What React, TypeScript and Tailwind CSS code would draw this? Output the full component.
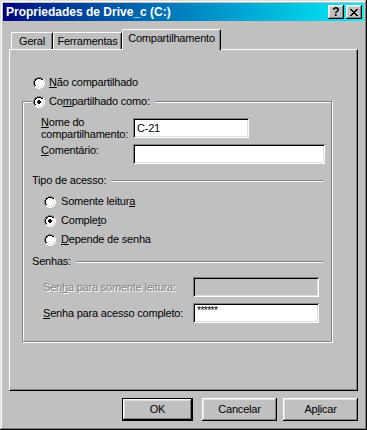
import { ReactNode } from "react";

// win98 bevels
const raised =
  "shadow-[inset_-1px_-1px_#000,inset_1px_1px_#fff,inset_-2px_-2px_#808080,inset_2px_2px_#dfdfdf]";
const sunken =
  "shadow-[inset_1px_1px_#808080,inset_-1px_-1px_#fff,inset_2px_2px_#000,inset_-2px_-2px_#dfdfdf]";

function Radio({ checked }: { checked?: boolean }) {
  return (
    <svg width="12" height="12" viewBox="0 0 12 12" shapeRendering="crispEdges" className="shrink-0">
      <path d="M4 0h4v1H4zM2 1h2v1H2zM8 1h2v1H8zM1 2h1v2H1zM0 4h1v4H0zM1 8h1v2H1z" fill="#808080" />
      <path d="M10 2h1v2h-1zM11 4h1v4h-1zM10 8h1v2h-1zM2 10h2v1H2zM8 10h2v1H8zM4 11h4v1H4z" fill="#fff" />
      <path d="M4 1h4v1H4zM2 2h2v1H2zM8 2h2v1H8zM2 3h1v1H2zM1 4h1v4H1zM2 8h1v1H2z" fill="#000" />
      <path d="M9 3h1v1H9zM10 4h1v4h-1zM9 8h1v1H9zM2 9h2v1H2zM8 9h2v1H8zM4 10h4v1H4z" fill="#dfdfdf" />
      <path d="M4 2h4v1H4zM3 3h6v1H3zM2 4h8v4H2zM3 8h6v1H3zM4 9h4v1H4z" fill="#fff" />
      {checked && <path d="M5 4h2v1H5zM4 5h4v2H4zM5 7h2v1H5z" fill="#000" />}
    </svg>
  );
}

function CloseGlyph() {
  return (
    <svg width="8" height="7" viewBox="0 0 8 7" shapeRendering="crispEdges">
      <path
        d="M0 0h2v1H0zM6 0h2v1H6zM1 1h2v1H1zM5 1h2v1H5zM2 2h4v1H2zM3 3h2v1H3zM2 4h4v1H2zM1 5h2v1H1zM5 5h2v1H5zM0 6h2v1H0zM6 6h2v1H6z"
        fill="#000"
      />
    </svg>
  );
}

function TitleButton({ children }: { children: ReactNode }) {
  return (
    <div className={`w-[16px] h-[14px] bg-[#c0c0c0] flex items-center justify-center ${raised}`}>
      {children}
    </div>
  );
}

function Tab({ label, width }: { label: ReactNode; width: string }) {
  return (
    <div
      className={`${width} h-[17px] flex items-center justify-center border-t border-l border-white border-r border-r-black rounded-tl-[2px] rounded-tr-[2px] shadow-[inset_-1px_0_#808080]`}
    >
      {label}
    </div>
  );
}

function Separator({ label }: { label: string }) {
  return (
    <div className="ml-[9px] mr-[8px] h-[13px] flex items-center gap-[5px]">
      <span className="whitespace-nowrap">{label}</span>
      <div className="flex-1 h-[2px] border-t border-t-[#808080] border-b border-b-white" />
    </div>
  );
}

function Button({ children, def, width }: { children: ReactNode; def?: boolean; width: string }) {
  return (
    <div
      className={`${width} h-[23px] flex items-center justify-center bg-[#c0c0c0] ${
        def
          ? "shadow-[inset_1px_1px_#000,inset_-1px_-1px_#000,inset_-2px_-2px_#000,inset_2px_2px_#fff,inset_-3px_-3px_#808080,inset_3px_3px_#dfdfdf]"
          : raised
      }`}
    >
      {children}
    </div>
  );
}

export default function App() {
  return (
    <div className="w-[367px] h-[430px] bg-[#c0c0c0] p-[3px] flex flex-col font-['Liberation_Sans',Arial,sans-serif] text-[11px] leading-[13px] tracking-[-0.2px] text-black shadow-[inset_-1px_-1px_#000,inset_1px_1px_#dfdfdf,inset_-2px_-2px_#808080,inset_2px_2px_#fff]">
      {/* title bar */}
      <div className="h-[18px] flex items-center pl-[3px] pr-[2px] bg-linear-to-r from-[#000080] to-[#10f0f8]">
        <span className="flex-1 text-white font-bold text-[12px] tracking-normal">
          Propriedades de Drive_c (C:)
        </span>
        <div className="flex gap-[2px]">
          <TitleButton>
            <span className="font-bold text-[12px] leading-none tracking-normal">?</span>
          </TitleButton>
          <TitleButton>
            <CloseGlyph />
          </TitleButton>
        </div>
      </div>

      <div className="mt-[8px] mx-[6px]">
        {/* tabs */}
        <div className="flex items-end h-[20px] pl-[2px]">
          <Tab label="Geral" width="w-[42px]" />
          <Tab label="Ferramentas" width="w-[69px]" />
          <div className="relative z-10 -mb-px w-[99px] h-[21px] pb-[3px] flex items-center justify-center bg-[#c0c0c0] border-t border-l border-white border-r border-r-black rounded-tl-[2px] rounded-tr-[2px] shadow-[inset_-1px_0_#808080]">
            Compartilhamento
          </div>
        </div>

        {/* panel */}
        <div className="h-[342px] border border-white border-r-black border-b-black shadow-[inset_-1px_-1px_#808080] pt-[26px] pl-[12px]">
          <div className="ml-[11px] h-[13px] flex items-center gap-[4px]">
            <Radio />
            <span>
              <u>N</u>ão compartilhado
            </span>
          </div>

          <div className="mt-[12px] w-[310px] h-[241px] border border-[#808080] shadow-[1px_1px_#fff,inset_1px_1px_#fff]">
            <div className="-mt-[7px] ml-[8px] w-fit h-[13px] flex items-center gap-[4px] pl-[2px] pr-[5px] bg-[#c0c0c0]">
              <Radio checked />
              <span>
                Co<u>m</u>partilhado como:
              </span>
            </div>

            <div className="mt-[10px] ml-[18px] flex items-start">
              <div className="w-[92px] -mt-[2px] leading-[12px] whitespace-nowrap">
                <u>N</u>ome do
                <br />
                compartilhamento:
              </div>
              <div className={`w-[116px] h-[20px] bg-white flex items-center pl-[4px] ${sunken}`}>C-21</div>
            </div>

            <div className="mt-[4px] ml-[18px] flex items-start">
              <div className="w-[92px]">
                <u>C</u>omentário:
              </div>
              <div className={`w-[192px] h-[20px] bg-white ${sunken}`} />
            </div>

            <div className="mt-[10px]">
              <Separator label="Tipo de acesso:" />
            </div>

            <div className="mt-[8px] ml-[21px] flex flex-col gap-[6px]">
              <div className="h-[13px] flex items-center gap-[5px]">
                <Radio />
                <span>
                  Somente leitur<u>a</u>
                </span>
              </div>
              <div className="h-[13px] flex items-center gap-[5px]">
                <Radio checked />
                <span>
                  Comple<u>t</u>o
                </span>
              </div>
              <div className="h-[13px] flex items-center gap-[5px]">
                <Radio />
                <span>
                  <u>D</u>epende de senha
                </span>
              </div>
            </div>

            <div className="mt-[9px]">
              <Separator label="Senhas:" />
            </div>

            <div className="mt-[9px] ml-[20px] flex items-center">
              <div className="w-[150px] text-[#808080] [text-shadow:1px_1px_0_#fff]">
                Sen<u>h</u>a para somente leitura:
              </div>
              <div className={`w-[126px] h-[20px] bg-[#c0c0c0] ${sunken}`} />
            </div>

            <div className="mt-[6px] ml-[20px] flex items-center">
              <div className="w-[150px]">
                <u>S</u>enha para acesso completo:
              </div>
              <div className={`w-[126px] h-[20px] bg-white pl-[4px] pt-[3px] text-[10px] leading-[10px] tracking-[-0.5px] ${sunken}`}>
                ******
              </div>
            </div>
          </div>
        </div>

        {/* buttons */}
        <div className="mt-[7px] flex justify-end gap-[6px]">
          <div className="mr-[3px]">
            <Button def width="w-[71px]">
              OK
            </Button>
          </div>
          <Button width="w-[75px]">Cancelar</Button>
          <Button width="w-[75px]">
            <span>
              Ap<u>l</u>icar
            </span>
          </Button>
        </div>
      </div>
    </div>
  );
}
